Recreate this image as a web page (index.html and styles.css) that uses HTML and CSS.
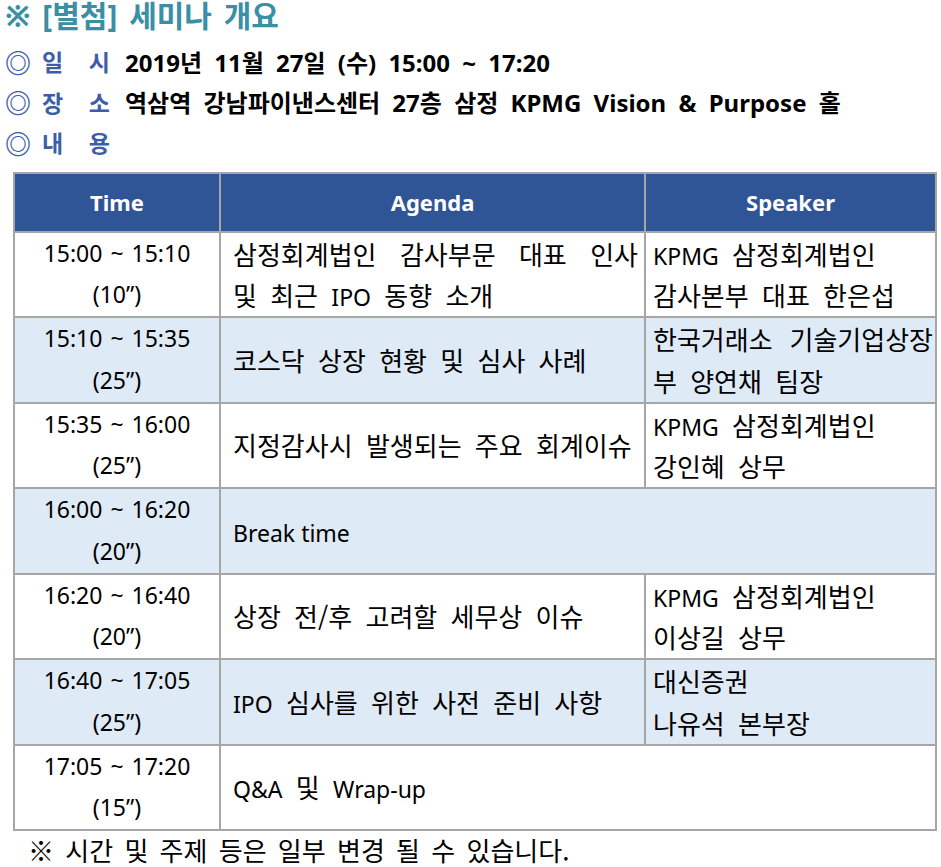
FILE: index.html
```html
<!DOCTYPE html>
<html lang="ko">
<head>
<meta charset="utf-8">
<title>세미나 개요</title>
<link rel="stylesheet" href="styles.css">
</head>
<body>
<div class="doc">
  <h1 class="title">※ [별첨] 세미나 개요</h1>
  <div class="info">
    <span class="mark">◎</span><span class="label">일 시</span><span class="val">2019년 11월 27일 (수) 15:00 ~ 17:20</span>
  </div>
  <div class="info">
    <span class="mark">◎</span><span class="label">장 소</span><span class="val">역삼역 강남파이낸스센터 27층 삼정 KPMG Vision &amp; Purpose 홀</span>
  </div>
  <div class="info">
    <span class="mark">◎</span><span class="label">내 용</span>
  </div>

  <table class="agenda">
    <colgroup>
      <col class="c-time">
      <col class="c-agenda">
      <col class="c-speaker">
    </colgroup>
    <thead>
      <tr><th>Time</th><th>Agenda</th><th>Speaker</th></tr>
    </thead>
    <tbody>
      <tr>
        <td class="time">15:00 ~ 15:10<br>(10”)</td>
        <td class="topic"><span class="jline">삼정회계법인 감사부문 대표 인사</span>및 최근 <span class="en">IPO</span> 동향 소개</td>
        <td class="speaker"><span class="en">KPMG</span> 삼정회계법인<br>감사본부 대표 한은섭</td>
      </tr>
      <tr class="alt">
        <td class="time">15:10 ~ 15:35<br>(25”)</td>
        <td class="topic">코스닥 상장 현황 및 심사 사례</td>
        <td class="speaker"><span class="jline">한국거래소 기술기업상장</span>부 양연채 팀장</td>
      </tr>
      <tr>
        <td class="time">15:35 ~ 16:00<br>(25”)</td>
        <td class="topic">지정감사시 발생되는 주요 회계이슈</td>
        <td class="speaker"><span class="en">KPMG</span> 삼정회계법인<br>강인혜 상무</td>
      </tr>
      <tr class="alt">
        <td class="time">16:00 ~ 16:20<br>(20”)</td>
        <td class="topic" colspan="2"><span class="en">Break time</span></td>
      </tr>
      <tr>
        <td class="time">16:20 ~ 16:40<br>(20”)</td>
        <td class="topic">상장 전/후 고려할 세무상 이슈</td>
        <td class="speaker"><span class="en">KPMG</span> 삼정회계법인<br>이상길 상무</td>
      </tr>
      <tr class="alt">
        <td class="time">16:40 ~ 17:05<br>(25”)</td>
        <td class="topic"><span class="en">IPO</span> 심사를 위한 사전 준비 사항</td>
        <td class="speaker">대신증권<br>나유석 본부장</td>
      </tr>
      <tr>
        <td class="time">17:05 ~ 17:20<br>(15”)</td>
        <td class="topic" colspan="2"><span class="en">Q&amp;A</span> 및 <span class="en">Wrap-up</span></td>
      </tr>
    </tbody>
  </table>

  <p class="note">※ 시간 및 주제 등은 일부 변경 될 수 있습니다.</p>
</div>
</body>
</html>
```

FILE: styles.css
```css
html, body {
  margin: 0;
  padding: 0;
  background: #ffffff;
}

body {
  font-family: "Noto Sans", "Noto Sans CJK KR", sans-serif;
  color: #000000;
}

.doc {
  padding: 3px 0 0 5px;
}

.title {
  margin: 0;
  font-size: 30px;
  line-height: 26px;
  font-weight: 700;
  color: #3a8fa5;
  word-spacing: 4px;
}

.info {
  display: flex;
  align-items: center;
  height: 40.5px;
  font-size: 24px;
  font-weight: 700;
}

.info:first-of-type {
  margin-top: 12px;
}

.mark {
  color: #3c5da8;
  width: 37px;
  font-size: 26px;
  font-weight: 900;
  font-family: "Noto Sans CJK KR", sans-serif;
}

.label {
  display: inline-block;
  width: 68px;
  color: #3c5da8;
  font-size: 23px;
  text-align: justify;
  text-align-last: justify;
}

.val {
  margin-left: 15px;
  word-spacing: 6px;
}

.agenda {
  margin: 9px 0 0 8px;
  border-collapse: collapse;
  table-layout: fixed;
  width: 922px;
}

.c-time { width: 206px; }
.c-agenda { width: 425px; }
.c-speaker { width: 291px; }

.agenda th,
.agenda td {
  border: 2px solid #a6a6a6;
  padding: 0;
}

.agenda th {
  background: #2f5597;
  color: #ffffff;
  font-size: 22px;
  font-weight: 700;
  height: 57px;
  text-align: center;
  vertical-align: middle;
}

.agenda td {
  height: 83.5px;
  line-height: 41.75px;
  vertical-align: middle;
}

.agenda .alt td {
  background: #deeaf6;
}

.time {
  text-align: center;
  font-size: 23px;
  word-spacing: 2px;
}

.topic,
.speaker {
  font-family: "Noto Sans CJK KR", sans-serif;
  font-size: 26px;
  word-spacing: 6px;
}

.en {
  font-family: "Noto Sans", sans-serif;
  font-size: 23px;
  line-height: 1;
  word-spacing: 0;
}

.topic {
  padding: 0 6px 0 12px !important;
}

.speaker {
  padding: 0 2px 0 7px !important;
}

.jline {
  display: block;
  text-align: justify;
  text-align-last: justify;
}

.note {
  margin: 4px 0 0 23px;
  font-family: "Noto Sans CJK KR", sans-serif;
  font-size: 26px;
  line-height: 30px;
  word-spacing: 4px;
}
```
